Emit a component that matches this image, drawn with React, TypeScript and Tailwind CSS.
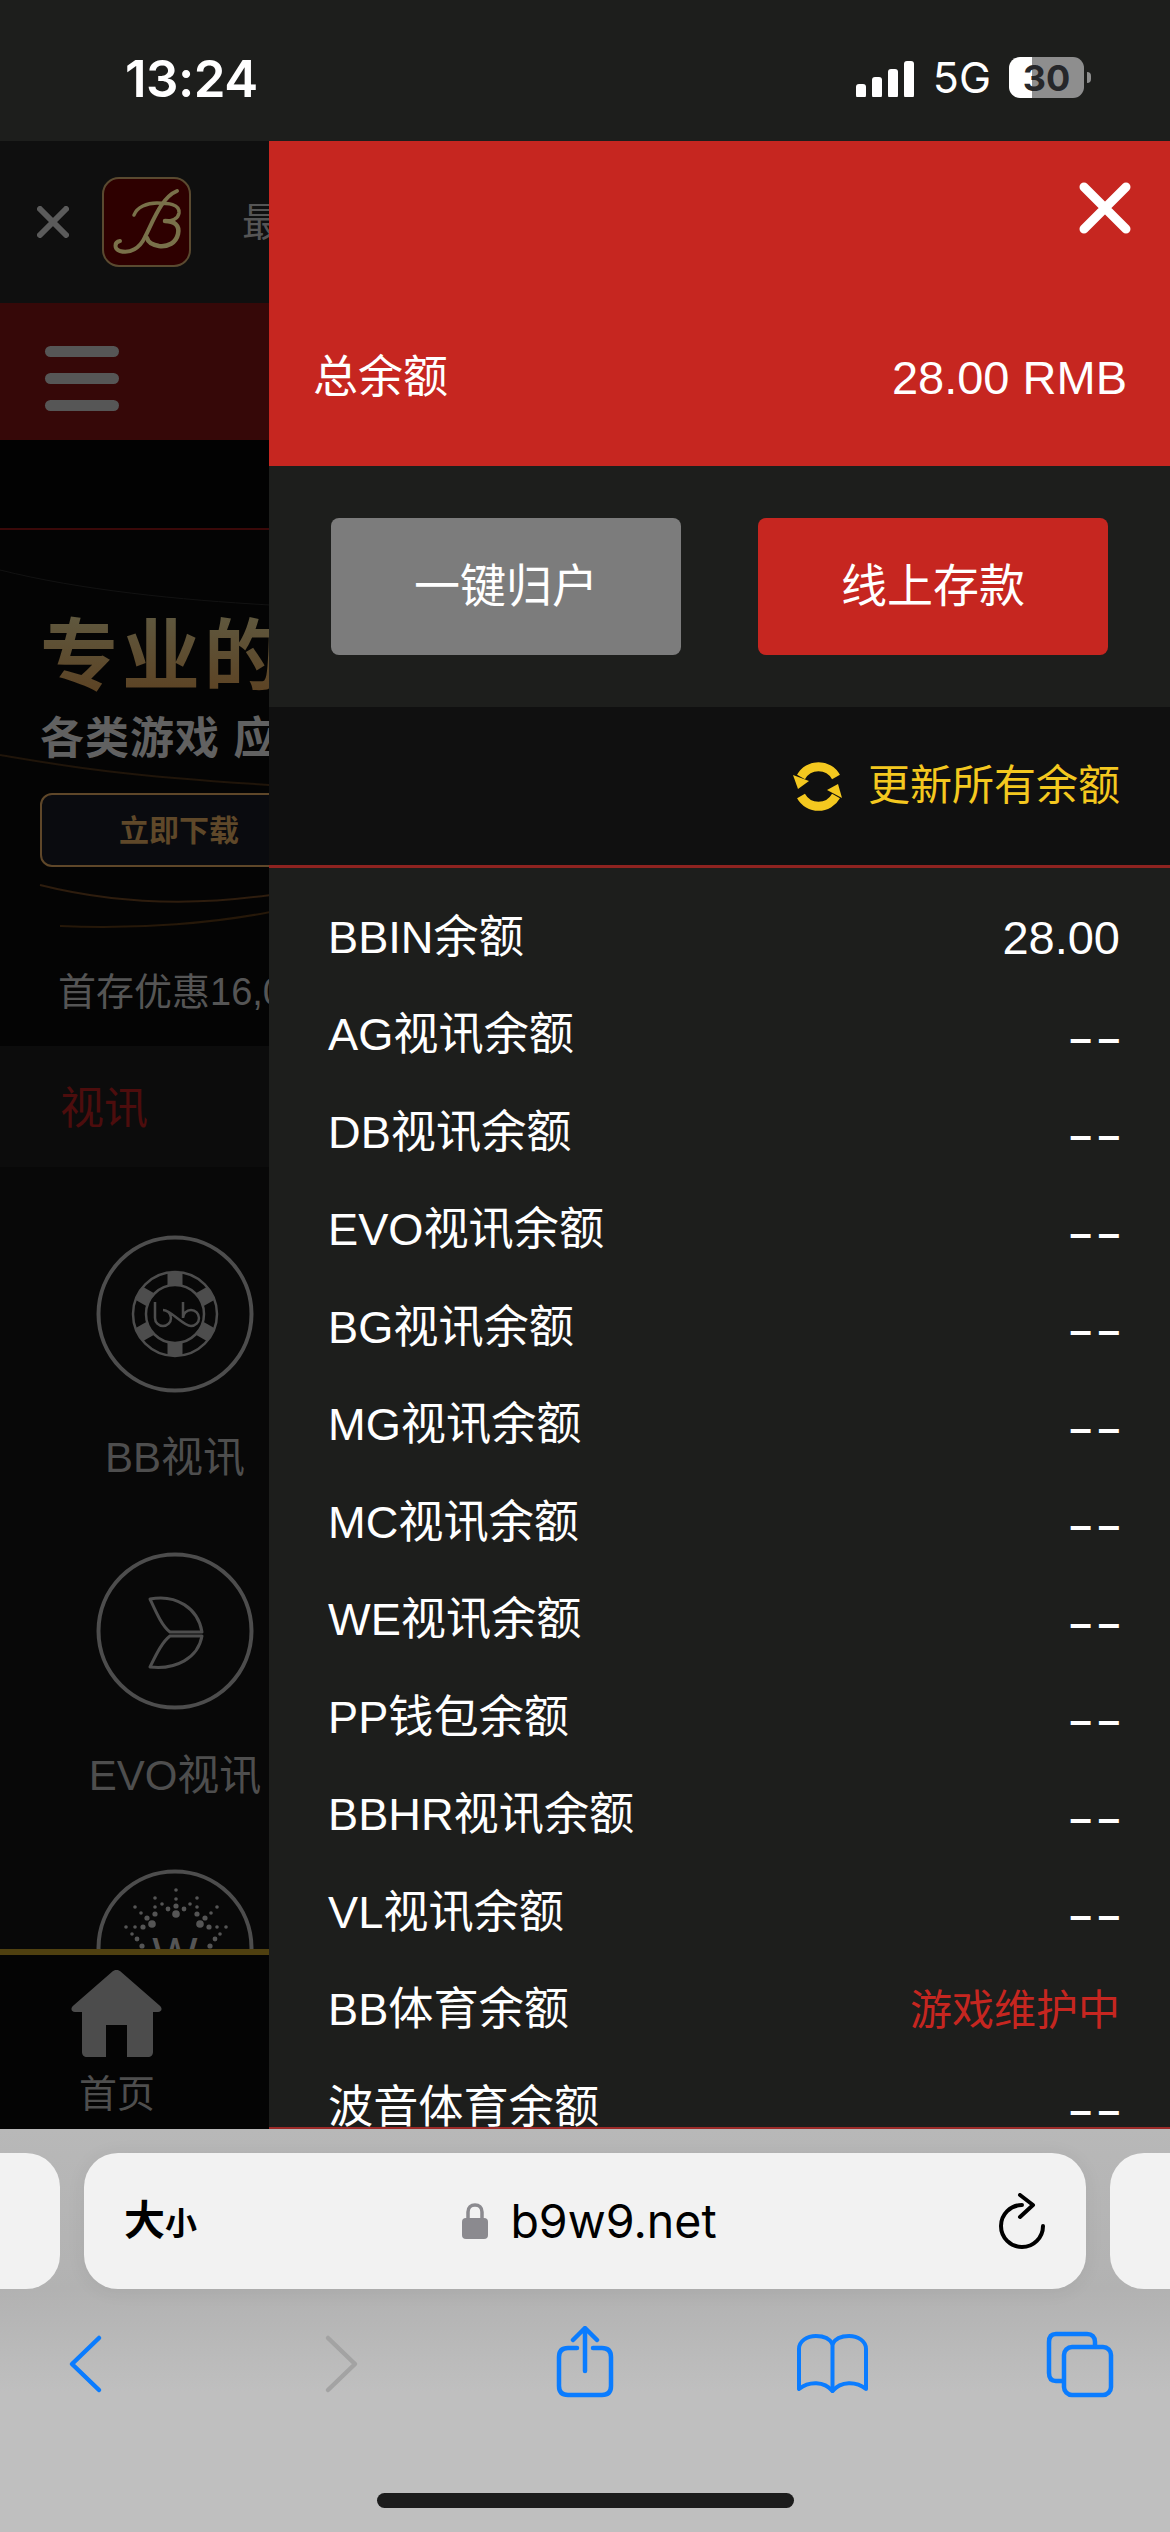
const ROWS: [string, string][] = [
  ['BBIN余额', '28.00'],
  ['AG视讯余额', '––'],
  ['DB视讯余额', '––'],
  ['EVO视讯余额', '––'],
  ['BG视讯余额', '––'],
  ['MG视讯余额', '––'],
  ['MC视讯余额', '––'],
  ['WE视讯余额', '––'],
  ['PP钱包余额', '––'],
  ['BBHR视讯余额', '––'],
  ['VL视讯余额', '––'],
  ['BB体育余额', '游戏维护中'],
  ['波音体育余额', '––'],
];

const DOTS: [number, number, number][] = [
  [59, 29, 1.8], [66, 35, 1.8], [72, 40, 2.4], [59, 38, 1.8], [59, 45, 2.6], [39, 38, 1.8], [45, 44, 1.8],
  [51, 49, 2.6], [56, 55, 3.8], [30, 58, 1.8], [39, 58, 1.8], [47, 58, 2.6], [36, 65, 1.8], [41, 70, 2.4], [46, 77, 2.6],
];

const StatusBar = () => (
  <div className="flex h-[141px] items-start bg-[#1d1e1c] pl-[125px] text-white">
    <span className="mt-[51px] text-[51px] leading-[56px] font-semibold tracking-[-0.5px] [font-family:Inter,sans-serif]">13:24</span>
    <div className="ml-auto mt-[57px] flex items-center pr-[79px]">
      <svg width="58" height="38" viewBox="0 0 58 38" fill="#fff">
        <rect x="0" y="25" width="10" height="14" rx="3" />
        <rect x="16" y="18" width="10" height="21" rx="3" />
        <rect x="32" y="10" width="10" height="29" rx="3" />
        <rect x="48" y="2" width="10" height="37" rx="3" />
      </svg>
      <span className="ml-[19px] text-[43px] leading-[41px] [font-family:Inter,sans-serif]">5G</span>
      <div className="ml-[18px] flex h-[41px] w-[75px] items-center justify-center rounded-[11px] bg-[linear-gradient(90deg,#fff_31%,#8e8e8e_31%)] text-[36px] font-bold leading-none text-[#26272a] [font-family:Inter,sans-serif]">30</div>
      <div className="ml-[3px] h-[11px] w-[4px] rounded-r-full bg-[#8e8e8e]" />
    </div>
  </div>
);

const Logo = () => (
  <div className="ml-[33px] h-[90px] w-[89px] shrink-0 rounded-[17px] border-2 border-[#5a4a30] bg-[#2e0000]">
    <svg width="85" height="86" viewBox="2 2 85 86" fill="none" stroke="#79714a" strokeLinecap="round">
      <path d="M75 14C60 20 52 42 43 60C38 71 28 77 18 74C12 72 12 65 18 64" strokeWidth="4" />
      <path d="M32 38C35 30 45 26 55 26C66 26 78 27 77 36C76 42 70 44 63 44" strokeWidth="3.5" />
      <path d="M63 44C72 44 78 48 76 57C74 66 66 70 57 69C51 68 46 65 45 61" strokeWidth="4.5" />
    </svg>
  </div>
);

const GameCircle = ({ children }: { children: React.ReactNode }) => (
  <svg width="158" height="158" viewBox="0 0 158 158" fill="none" stroke="#4d4d4d" className="mx-auto">
    <circle cx="79" cy="79" r="76.5" strokeWidth="4" />
    {children}
  </svg>
);

const LeftPage = () => (
  <div className="relative w-[269px] shrink-0 overflow-hidden bg-black">
    <div className="flex h-[162px] items-center bg-[#0f0f0f]">
      <svg width="32" height="32" viewBox="0 0 32 32" className="ml-[37px] shrink-0" stroke="#5b5b5b" strokeWidth="6" strokeLinecap="round">
        <path d="M3 3L29 29M29 3L3 29" />
      </svg>
      <Logo />
      <span className="ml-[51px] shrink-0 text-[40px] text-[#555]">最新</span>
    </div>
    <div className="flex h-[137px] flex-col justify-center gap-[16px] bg-[#360808] pl-[45px] pt-[14px]">
      <div className="h-[11px] w-[74px] rounded-full bg-[#565656]" />
      <div className="h-[11px] w-[74px] rounded-full bg-[#565656]" />
      <div className="h-[11px] w-[74px] rounded-full bg-[#565656]" />
    </div>
    <div className="h-[90px] border-b-2 border-[#3a0909] bg-[#020202]" />

    {/* banner */}
    <div className="relative h-[400px] w-[500px] bg-[#040404] pl-[40px] pt-[81px]">
      <svg className="absolute left-0 top-0" width="500" height="400" fill="none">
        <path d="M0 40C80 60 180 70 270 75" stroke="#121212" strokeWidth="1" />
        <path d="M0 225C60 235 110 245 270 255" stroke="#20150a" strokeWidth="2" />
        <path d="M40 355C120 375 200 375 270 365" stroke="#2e1d0e" strokeWidth="2" />
        <path d="M60 396C140 400 220 392 270 382" stroke="#261809" strokeWidth="2" />
      </svg>
      <div className="relative whitespace-nowrap bg-[linear-gradient(180deg,#5f5940,#5c4020)] bg-clip-text text-[78px] leading-[92px] font-bold tracking-[4px] text-transparent">专业的平台</div>
      <div className="relative mt-[8px] whitespace-nowrap text-[44px] leading-[56px] font-bold tracking-[1px] text-[#616161]">各类游戏 应有尽有</div>
      <div className="relative mt-[26px] flex h-[74px] w-[278px] items-center justify-center rounded-[12px] border-2 border-[#5f4729] bg-[#0a0b0f] text-[30px] font-bold text-[#5f4829]">立即下载</div>
    </div>

    <div className="flex h-[116px] items-center whitespace-nowrap bg-[#040404] pl-[58px] pt-[8px] text-[38px] text-[#555]">首存优惠16,000</div>
    <div className="flex h-[121px] items-center bg-[#0c0c0c] pl-[60px] pt-[5px] text-[44px] text-[#4d0d0d]">视讯</div>

    <div className="h-[783px] w-[350px] bg-[#080808] pt-[68px]">
      <div className="h-[317px] text-center">
        <GameCircle>
          <circle cx="79" cy="79" r="42" strokeWidth="2.5" />
          <circle cx="79" cy="79" r="29" strokeWidth="2.5" />
          <g stroke="#4d4d4d" strokeWidth="15">
            <path d="M79 37V50M79 108V121" />
            <path d="M42.6 58L54 64.500M115.400 100L104 93.500" />
            <path d="M42.600 100L54 93.500M115.400 58L104 64.500" />
          </g>
          <path d="M59 67V83A8 8 0 1 0 67 75C75 75 87 91 95 91A8 8 0 1 0 87 83V67" strokeWidth="2.500" />
        </GameCircle>
        <div className="mt-[39px] text-[42px] leading-[52px] text-[#4e4e4e]">BB视讯</div>
      </div>
      <div className="h-[317px] text-center">
        <GameCircle>
          <path d="M54 47C80 42 102 56 106 80H74C66 74 60 60 54 47Z" strokeWidth="3" strokeLinejoin="round" />
          <path d="M106 84C102 106 80 118 54 115C60 103 66 90 74 84Z" strokeWidth="3" strokeLinejoin="round" />
        </GameCircle>
        <div className="mt-[40px] whitespace-nowrap text-[42px] leading-[52px] text-[#4e4e4e]">EVO视讯</div>
      </div>
      <GameCircle>
        <circle cx="80" cy="21" r="1.800" fill="#555" stroke="none" />
        <circle cx="80" cy="30" r="1.800" fill="#555" stroke="none" />
        <circle cx="80" cy="37" r="2.600" fill="#555" stroke="none" />
        <circle cx="80" cy="45" r="3.800" fill="#555" stroke="none" />
        {DOTS.map(([x, y, r]) => (
          <g key={`${x}-${y}`} fill="#555" stroke="none">
            <circle cx={x} cy={y} r={r} />
            <circle cx={160 - x} cy={y} r={r} />
          </g>
        ))}
        <text x="79" y="102" textAnchor="middle" fontSize="48" fill="#555" stroke="none" fontFamily="Liberation Sans">W</text>
      </GameCircle>
    </div>

    <div className="absolute bottom-0 left-0 flex h-[180px] w-full flex-col border-t-[6px] border-[#4f4010] bg-[#040404] pl-[71px]">
      <svg width="91" height="87" viewBox="0 0 91 87" className="mt-[15px]" fill="#4c4c4c">
        <path d="M45.500 0C47 0 48 0.500 49 1L88 35C92 38 91 42 87 42H82V82C82 85 80 87 77 87H56V55H35V87H16C13 87 11 85 11 82V42H4C0 42 -1 38 3 35L42 1C43 0.500 44 0 45.500 0Z" />
      </svg>
      <span className="mt-[16px] pl-[8px] text-[38px] leading-[42px] text-[#4e4e4e]">首页</span>
    </div>
  </div>
);

const Panel = () => (
  <div className="flex min-w-0 flex-1 flex-col overflow-hidden border-b-[2px] border-[#9c2a28] bg-[#1d1e1c]">
    <div className="flex h-[325px] shrink-0 flex-col bg-[#c62620] pl-[44px] pr-[43px] text-white">
      <svg width="52" height="52" viewBox="0 0 52 52" className="ml-auto mr-[-4px] mt-[41px]" stroke="#fff" strokeWidth="9" strokeLinecap="round">
        <path d="M5 5L47 47M47 5L5 47" />
      </svg>
      <div className="mt-[114px] flex items-center justify-between text-[47px] leading-[60px]">
        <span className="text-[45px]">总余额</span>
        <span>28.00 RMB</span>
      </div>
    </div>

    <div className="flex h-[241px] shrink-0 gap-[77px] px-[62px] pt-[52px]">
      <button className="h-[137px] w-[350px] rounded-[8px] bg-[#7c7c7c] text-[46px] text-white">一键归户</button>
      <button className="h-[137px] w-[350px] rounded-[8px] bg-[#c62620] text-[46px] text-white">线上存款</button>
    </div>

    <div className="flex h-[161px] shrink-0 items-center justify-end border-b-[3px] border-[#8f2320] bg-[#101010] pr-[50px]">
      <svg width="52" height="52" viewBox="12 15 52 52" className="mr-[24px]" fill="#f4c81f">
        <path d="M21 32A20 20 0 0 1 56 32" fill="none" stroke="#f4c81f" strokeWidth="9" />
        <path d="M13 30L29 36L18 44Z" />
        <path d="M21 51A20 20 0 0 0 56 51" fill="none" stroke="#f4c81f" strokeWidth="9" />
        <path d="M62 53L47 45L58 39Z" />
      </svg>
      <span className="text-[42px] leading-[52px] text-[#f4c81f]">更新所有余额</span>
    </div>

    <div className="flex flex-col pt-[21px] pl-[59px] pr-[50px]">
      {ROWS.map(([name, value]) => (
        <div key={name} className="flex h-[97.5px] shrink-0 items-center justify-between text-[45.2px] text-white">
          <span>{name}</span>
          {value === '游戏维护中' ? (
            <span className="text-[42px] text-[#c62620]">{value}</span>
          ) : value === '––' ? (
            <span className="-mr-[6px] pt-[5px] text-[40px] font-bold tracking-[6px]">{value}</span>
          ) : (
            <span className="text-[47px]">{value}</span>
          )}
        </div>
      ))}
    </div>
  </div>
);

const SafariBar = () => (
  <div className="flex h-[403px] flex-col bg-[linear-gradient(180deg,#b8b8b8,#b2b2b2_40%,#bfbfbf_65%,#bfbfbf)]">
    <div className="mt-[24px] flex h-[136px] shrink-0 gap-[24px]">
      <div className="w-[60px] rounded-r-[34px] bg-[#f2f2f2]" />
      <div className="grid w-[1002px] grid-cols-[1fr_auto_1fr] items-center rounded-[34px] bg-[#f2f2f2] pl-[40px] pr-[41px] shadow-[0_2px_20px_rgba(0,0,0,0.06)]">
        <div className="flex items-end font-bold text-black">
          <span className="text-[41px] leading-[44px]">大</span>
          <span className="text-[32px] leading-[38px]">小</span>
        </div>
        <div className="ml-[10px] flex items-center gap-[22px]">
          <svg width="26" height="36" viewBox="0 0 26 36">
            <path d="M6 17V9C6 4.500 9 2 13 2C17 2 20 4.500 20 9V17" fill="none" stroke="#8b8a8f" strokeWidth="3.500" />
            <rect x="0" y="15" width="26" height="21" rx="4" fill="#8b8a8f" />
          </svg>
          <span className="text-[46.500px] leading-[56px] text-black [font-family:Inter,sans-serif]">b9w9.net</span>
        </div>
        <svg width="46" height="56" viewBox="0 0 46 56" fill="none" stroke="#000" strokeWidth="4" strokeLinecap="round" strokeLinejoin="round" className="justify-self-end">
          <path d="M44 33A21 21 0 1 1 23 12" />
          <path d="M21 2L34 12L21 24" />
        </svg>
      </div>
      <div className="flex-1 rounded-l-[34px] bg-[#f2f2f2]" />
    </div>

    <div className="mt-[37px] flex h-[80px] shrink-0 justify-between pl-[36px] pr-[40px]">
      <svg width="100" height="80" viewBox="36 2326 100 80" fill="none" stroke="#0a7cff" strokeWidth="4.500" strokeLinecap="round" strokeLinejoin="round">
        <path d="M99 2338L72 2364L99 2390" />
      </svg>
      <svg width="100" height="80" viewBox="285 2326 100 80" fill="none" stroke="#a3a3a3" strokeWidth="4.500" strokeLinecap="round" strokeLinejoin="round">
        <path d="M328 2338L355 2364L328 2390" />
      </svg>
      <svg width="100" height="80" viewBox="533 2326 100 80" fill="none" stroke="#0a7cff" strokeWidth="4.500" strokeLinecap="round" strokeLinejoin="round">
        <path d="M577 2348H568C562 2348 559 2351 559 2357V2386C559 2392 562 2395 568 2395H602C608 2395 611 2392 611 2386V2357C611 2351 608 2348 602 2348H593" />
        <path d="M585 2329V2371M573 2340L585 2328L597 2340" />
      </svg>
      <svg width="100" height="80" viewBox="782 2326 100 80" fill="none" stroke="#0a7cff" strokeWidth="4" strokeLinecap="round" strokeLinejoin="round">
        <path d="M799 2389V2349C799 2341 807 2336 816 2336C824 2336 830 2339 832.500 2344C835 2339 841 2336 849 2336C858 2336 866 2341 866 2349V2389C856 2381 841 2381 832.500 2391C824 2381 809 2381 799 2389Z" />
        <path d="M832.500 2344V2391" />
      </svg>
      <svg width="100" height="80" viewBox="1030 2326 100 80" fill="none" stroke="#0a7cff" strokeWidth="4.500" strokeLinecap="round" strokeLinejoin="round">
        <path d="M1063 2381H1056C1051 2381 1049 2378 1049 2373V2342C1049 2337 1051 2334 1056 2334H1087C1092 2334 1095 2337 1095 2342V2346" />
        <rect x="1064" y="2347" width="47" height="48" rx="8" />
      </svg>
    </div>

    <div className="mx-auto mt-[87px] h-[15px] w-[417px] rounded-full bg-[#1c1c1c]" />
  </div>
);

export default function App() {
  return (
    <div className="flex h-[2532px] w-[1170px] flex-col overflow-hidden [font-family:'Liberation_Sans','Noto_Sans_CJK_SC',sans-serif]">
      <StatusBar />
      <div className="flex h-[1988px] shrink-0">
        <LeftPage />
        <Panel />
      </div>
      <SafariBar />
    </div>
  );
}
